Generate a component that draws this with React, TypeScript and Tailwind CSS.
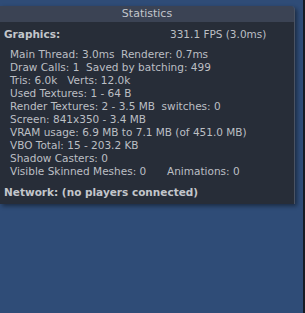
import React from "react";

const lines: React.ReactNode[] = [
  "Main Thread: 3.0ms  Renderer: 0.7ms",
  "Draw Calls: 1  Saved by batching: 499",
  "Tris: 6.0k   Verts: 12.0k",
  "Used Textures: 1 - 64 B",
  "Render Textures: 2 - 3.5 MB  switches: 0",
  "Screen: 841x350 - 3.4 MB",
  "VRAM usage: 6.9 MB to 7.1 MB (of 451.0 MB)",
  "VBO Total: 15 - 203.2 KB",
  "Shadow Casters: 0",
];

export default function App() {
  return (
    <div
      className="flex h-[313px] w-[305px] bg-[#2f4c77] overflow-hidden"
      style={{ fontFamily: '"DejaVu Sans", "Open Sans", sans-serif' }}
    >
      <div className="pt-[6px] w-[296px] shrink-0">
        <div className="w-[295px] rounded-tr-[4px] border-r border-[#4a5363] shadow-[2px_2px_4px_rgba(0,0,0,0.45)] overflow-hidden">
          <div className="h-[16px] bg-[#3b4354] flex items-center justify-center text-[11px] leading-[16px] text-[#c2c6cc]">
            Statistics
          </div>
          <div className="bg-[#272d38] h-[182px] text-[10.5px] text-[#bcbfc4]">
            <div className="flex h-[19px] items-end pl-[4px]">
              <span className="w-[166px] font-bold text-[#c3c6cb] leading-[13px]">Graphics:</span>
              <span className="leading-[13px]">331.1 FPS (3.0ms)</span>
            </div>
            <div className="pt-[7px] pl-[10px]">
              {lines.map((l, i) => (
                <div key={i} className="h-[13px] leading-[13px] whitespace-pre">
                  {l}
                </div>
              ))}
              <div className="h-[13px] leading-[13px] flex whitespace-pre">
                <span className="w-[157px]">Visible Skinned Meshes: 0</span>
                <span>Animations: 0</span>
              </div>
            </div>
            <div className="pl-[4px] pt-[8px] font-bold leading-[13px] text-[#c3c6cb]">
              Network: (no players connected)
            </div>
          </div>
        </div>
      </div>
      <div className="flex-1" />
      <div className="w-[2px] bg-[#161b24]" />
    </div>
  );
}
